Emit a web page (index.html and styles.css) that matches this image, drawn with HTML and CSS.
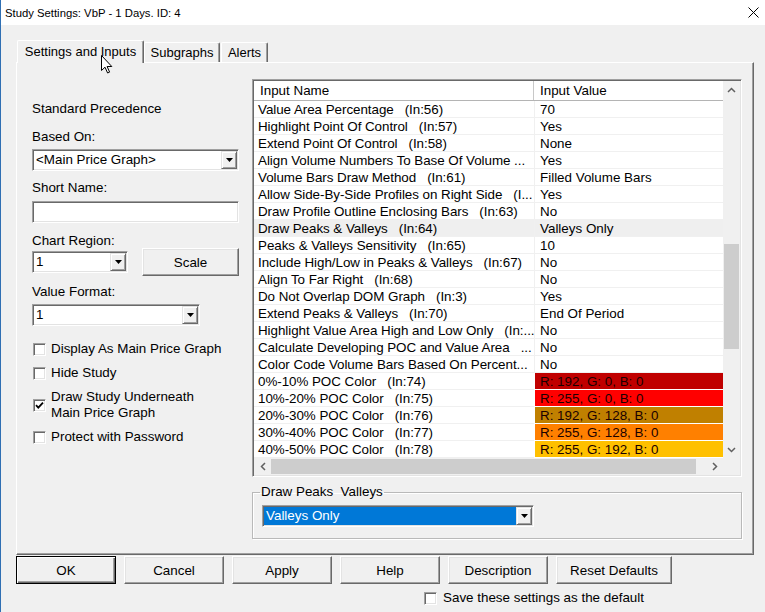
FILE: index.html
```html
<!DOCTYPE html>
<html lang="en">
<head>
  <meta charset="UTF-8" />
  <meta name="viewport" content="width=device-width, initial-scale=1.0" />
  <title>Study Settings: VbP - 1 Days. ID: 4</title>
  <link rel="stylesheet" href="styles.css">
</head>
<body>
  <div class="titlebar">
    <span class="title">Study Settings: VbP - 1 Days. ID: 4</span>
    <svg class="close" width="11" height="11" viewBox="0 0 11 11"><path d="M0.5 0.5L10.5 10.5M10.5 0.5L0.5 10.5" stroke="#000" stroke-width="1"/></svg>
  </div>

  <div class="dialog">
    <div class="tabs">
      <div class="tab tab-active tab-settings">Settings and Inputs</div>
      <div class="tab tab-subgraphs">Subgraphs</div>
      <div class="tab tab-alerts">Alerts</div>
    </div>

    <div class="panel">
      <div class="left-col">
        <div class="precedence">Standard Precedence</div>

        <div class="field-label">Based On:</div>
        <div class="combo combo-based">
          <span class="combo-text">&lt;Main Price Graph&gt;</span>
          <span class="combo-btn"><svg width="7" height="4" viewBox="0 0 7 4"><path d="M0 0H7L3.5 4Z" fill="#000"/></svg></span>
        </div>

        <div class="field-label label-gap">Short Name:</div>
        <div class="textbox"></div>

        <div class="field-label label-gap label-region">Chart Region:</div>
        <div class="region-row">
          <div class="combo combo-region">
            <span class="combo-text">1</span>
            <span class="combo-btn"><svg width="7" height="4" viewBox="0 0 7 4"><path d="M0 0H7L3.5 4Z" fill="#000"/></svg></span>
          </div>
          <button class="btn btn-scale">Scale</button>
        </div>

        <div class="field-label label-format">Value Format:</div>
        <div class="combo combo-format">
          <span class="combo-text">1</span>
          <span class="combo-btn"><svg width="7" height="4" viewBox="0 0 7 4"><path d="M0 0H7L3.5 4Z" fill="#000"/></svg></span>
        </div>

        <div class="checks">
          <div class="check"><span class="box"></span><span>Display As Main Price Graph</span></div>
          <div class="check"><span class="box"></span><span>Hide Study</span></div>
          <div class="check"><span class="box"><svg width="9" height="9" viewBox="0 0 9 9"><path d="M1 4.2L3.3 6.6L8 1.6" fill="none" stroke="#000" stroke-width="1.8"/></svg></span><span>Draw Study Underneath<br>Main Price Graph</span></div>
          <div class="check"><span class="box"></span><span>Protect with Password</span></div>
        </div>
      </div>

      <div class="right-col">
        <div class="inputs-table">
          <div class="grid-area">
            <div class="grid-head">
              <div class="head-name">Input Name</div>
              <div class="head-value">Input Value</div>
            </div>
            <div class="row"><div class="cell-name">Value Area Percentage   (In:56)</div><div class="cell-value">70</div></div>
            <div class="row"><div class="cell-name">Highlight Point Of Control   (In:57)</div><div class="cell-value">Yes</div></div>
            <div class="row"><div class="cell-name">Extend Point Of Control   (In:58)</div><div class="cell-value">None</div></div>
            <div class="row"><div class="cell-name">Align Volume Numbers To Base Of Volume ...</div><div class="cell-value">Yes</div></div>
            <div class="row"><div class="cell-name">Volume Bars Draw Method   (In:61)</div><div class="cell-value">Filled Volume Bars</div></div>
            <div class="row"><div class="cell-name">Allow Side-By-Side Profiles on Right Side   (I...</div><div class="cell-value">Yes</div></div>
            <div class="row"><div class="cell-name">Draw Profile Outline Enclosing Bars   (In:63)</div><div class="cell-value">No</div></div>
            <div class="row row-selected"><div class="cell-name">Draw Peaks &amp; Valleys   (In:64)</div><div class="cell-value">Valleys Only</div></div>
            <div class="row"><div class="cell-name">Peaks &amp; Valleys Sensitivity   (In:65)</div><div class="cell-value">10</div></div>
            <div class="row"><div class="cell-name">Include High/Low in Peaks &amp; Valleys   (In:67)</div><div class="cell-value">No</div></div>
            <div class="row"><div class="cell-name">Align To Far Right   (In:68)</div><div class="cell-value">No</div></div>
            <div class="row"><div class="cell-name">Do Not Overlap DOM Graph   (In:3)</div><div class="cell-value">Yes</div></div>
            <div class="row"><div class="cell-name">Extend Peaks &amp; Valleys   (In:70)</div><div class="cell-value">End Of Period</div></div>
            <div class="row"><div class="cell-name">Highlight Value Area High and Low Only   (In:...</div><div class="cell-value">No</div></div>
            <div class="row"><div class="cell-name">Calculate Developing POC and Value Area   ...</div><div class="cell-value">No</div></div>
            <div class="row"><div class="cell-name">Color Code Volume Bars Based On Percent...</div><div class="cell-value">No</div></div>
            <div class="row"><div class="cell-name">0%-10% POC Color   (In:74)</div><div class="cell-value swatch swatch-1">R: 192, G: 0, B: 0</div></div>
            <div class="row"><div class="cell-name">10%-20% POC Color   (In:75)</div><div class="cell-value swatch swatch-2">R: 255, G: 0, B: 0</div></div>
            <div class="row"><div class="cell-name">20%-30% POC Color   (In:76)</div><div class="cell-value swatch swatch-3">R: 192, G: 128, B: 0</div></div>
            <div class="row"><div class="cell-name">30%-40% POC Color   (In:77)</div><div class="cell-value swatch swatch-4">R: 255, G: 128, B: 0</div></div>
            <div class="row"><div class="cell-name">40%-50% POC Color   (In:78)</div><div class="cell-value swatch swatch-5">R: 255, G: 192, B: 0</div></div>
          </div>

          <div class="vscroll">
            <div class="sb-btn"><svg width="9" height="6" viewBox="0 0 9 6"><path d="M1 5L4.5 1.5L8 5" fill="none" stroke="#606060" stroke-width="1.5"/></svg></div>
            <div class="vtrack"><div class="vthumb"></div></div>
            <div class="sb-btn"><svg width="9" height="6" viewBox="0 0 9 6"><path d="M1 1L4.5 4.5L8 1" fill="none" stroke="#606060" stroke-width="1.5"/></svg></div>
          </div>

          <div class="hscroll">
            <div class="sb-btn"><svg width="6" height="9" viewBox="0 0 6 9"><path d="M5 1L1.5 4.5L5 8" fill="none" stroke="#606060" stroke-width="1.5"/></svg></div>
            <div class="htrack"><div class="hthumb"></div></div>
            <div class="sb-btn"><svg width="6" height="9" viewBox="0 0 6 9"><path d="M1 1L4.5 4.5L1 8" fill="none" stroke="#606060" stroke-width="1.5"/></svg></div>
          </div>

          <div class="corner"></div>
        </div>

        <fieldset class="group">
          <legend>Draw Peaks&nbsp; Valleys</legend>
          <div class="combo combo-edit">
            <span class="combo-text combo-selected">Valleys Only</span>
            <span class="combo-btn"><svg width="7" height="4" viewBox="0 0 7 4"><path d="M0 0H7L3.5 4Z" fill="#000"/></svg></span>
          </div>
        </fieldset>
      </div>
    </div>

    <div class="buttons">
      <button class="btn btn-default">OK</button>
      <button class="btn">Cancel</button>
      <button class="btn">Apply</button>
      <button class="btn">Help</button>
      <button class="btn">Description</button>
      <button class="btn btn-reset">Reset Defaults</button>
    </div>

    <div class="check save-default"><span class="box"></span><span>Save these settings as the default</span></div>
  </div>

  <svg class="cursor" width="13" height="20" viewBox="0 0 13 20"><path d="M0.5 0.5V15.5L4 12.2L6.6 18L8.6 17.1L6.1 11.5H10.8Z" fill="#fff" stroke="#000" stroke-width="1" stroke-linejoin="round"/></svg>
</body>
</html>
```

FILE: styles.css
```css
html, body {
  margin: 0;
}

body {
  position: relative;
  width: 765px;
  height: 612px;
  overflow: hidden;
  box-sizing: border-box;
  border-left: 1px solid #2f6fb3;
  background-color: #f0f0f0;
  color: #000;
  font-family: "Liberation Sans", Arial, sans-serif;
  font-size: 13.4px;
  line-height: 16px;
}

/* title bar */
.titlebar {
  height: 25px;
  background-color: #fff;
  display: flex;
  align-items: center;
  justify-content: space-between;
  padding: 0 6px 0 4px;
}

.title {
  font-size: 11.3px;
}

/* dialog body */
.dialog {
  padding-left: 15px;
}

.tabs {
  display: flex;
  align-items: flex-end;
  height: 22px;
  margin-top: 15px;
}

.tab {
  box-sizing: border-box;
  height: 20px;
  padding-top: 2px;
  margin-left: 1px;
  text-align: center;
  font-size: 13px;
  border: 1px solid;
  border-color: #fff #696969 transparent #fff;
  border-bottom: none;
  border-radius: 2px 2px 0 0;
  box-shadow: inset -1px 0 #a0a0a0;
}

.tab-active {
  position: relative;
  z-index: 1;
  height: 23px;
  padding-top: 3px;
  margin-bottom: -1px;
  background-color: #f0f0f0;
}

.tab-settings { width: 127px; }
.tab-subgraphs { width: 76px; margin-left: 0; }
.tab-alerts { width: 47px; }

.panel {
  box-sizing: border-box;
  width: 738px;
  height: 493px;
  display: flex;
  padding: 16px 0 0 15px;
  border: 1px solid;
  border-color: #fff #696969 #696969 #fff;
  box-shadow: inset -1px -1px #a0a0a0;
}

/* left column */
.left-col {
  width: 207px;
  margin-top: 22px;
  display: flex;
  flex-direction: column;
}

.precedence {
  margin-bottom: 12px;
}

.field-label {
  margin-bottom: 4px;
}

.label-gap {
  margin-top: 9px;
}

.label-region {
  margin-top: 10px;
  margin-bottom: -1px;
}

.label-format {
  margin-top: 8px;
}

.combo,
.textbox {
  box-sizing: border-box;
  height: 22px;
  display: flex;
  padding: 1px;
  background-color: #fff;
  border: 1px solid;
  border-color: #a0a0a0 #fff #fff #a0a0a0;
  box-shadow: inset 1px 1px #696969, inset -1px -1px #e3e3e3;
}

.textbox {
  margin-top: 1px;
}

.combo-text {
  flex: 1;
  padding-left: 2px;
  line-height: 18px;
  white-space: nowrap;
  overflow: hidden;
}

.combo-btn {
  box-sizing: border-box;
  width: 16px;
  display: flex;
  align-items: center;
  justify-content: center;
  background-color: #f0f0f0;
  border: 1px solid;
  border-color: #e3e3e3 #696969 #696969 #e3e3e3;
  box-shadow: inset 1px 1px #fff, inset -1px -1px #a0a0a0;
}

.region-row {
  display: flex;
  align-items: center;
  justify-content: space-between;
}

.combo-region { width: 96px; }
.combo-format { width: 168px; }

.btn {
  box-sizing: border-box;
  width: 100px;
  height: 28px;
  padding: 0;
  font-family: inherit;
  font-size: 13.4px;
  color: #000;
  background-color: #f0f0f0;
  border: 1px solid;
  border-color: #fff #696969 #696969 #fff;
  box-shadow: inset -1px -1px #a0a0a0, inset 1px 1px #e3e3e3;
}

.btn-scale { width: 97px; }

.btn-default {
  border-color: #000;
  box-shadow: inset 1px 1px #fff, inset -1px -1px #696969, inset -2px -2px #a0a0a0;
}

.btn-reset { width: 116px; }

/* checkboxes */
.checks {
  margin-top: 15px;
  display: flex;
  flex-direction: column;
  gap: 8px;
}

.check {
  display: flex;
  align-items: center;
  gap: 5px;
}

.box {
  box-sizing: border-box;
  width: 13px;
  height: 13px;
  flex: none;
  margin-left: 1px;
  display: flex;
  align-items: center;
  justify-content: center;
  background-color: #fff;
  border: 1px solid;
  border-color: #a0a0a0 #fff #fff #a0a0a0;
  box-shadow: inset 1px 1px #696969, inset -1px -1px #e3e3e3;
}

/* inputs list */
.right-col {
  width: 490px;
  margin-left: 13px;
}

.inputs-table {
  box-sizing: border-box;
  height: 398px;
  padding: 1px;
  display: grid;
  grid-template-columns: 1fr 17px;
  grid-template-rows: 1fr 17px;
  border: 1px solid;
  border-color: #a0a0a0 #fff #fff #a0a0a0;
  box-shadow: inset 1px 1px #696969, inset -1px -1px #e3e3e3;
}

.grid-area {
  background-color: #fff;
  overflow: hidden;
}

.grid-head {
  display: flex;
  height: 20px;
  box-sizing: border-box;
  border-bottom: 1px solid #b4b4b4;
  line-height: 19px;
}

.head-name {
  box-sizing: border-box;
  width: 280px;
  padding-left: 6px;
  border-right: 1px solid #c8c8c8;
}

.head-value {
  padding-left: 6px;
}

.row {
  display: flex;
  height: 17px;
}

.cell-name,
.cell-value {
  box-sizing: border-box;
  height: 17px;
  padding-top: 2px;
  line-height: 14px;
  border-bottom: 1px solid #f0f0f0;
  white-space: pre;
}

.cell-name {
  width: 280px;
  padding-left: 4px;
  letter-spacing: -0.05px;
}

.cell-value {
  flex: 1;
  padding-left: 5px;
  border-left: 1px solid #f0f0f0;
}

.row-selected .cell-name,
.row-selected .cell-value {
  background-color: #efefef;
}

.swatch {
  border-color: #fff;
  color: #1a0000;
}

.swatch-1 { background-color: #c00000; }
.swatch-2 { background-color: #ff0000; }
.swatch-3 { background-color: #c08000; }
.swatch-4 { background-color: #ff8000; }
.swatch-5 { background-color: #ffc000; }

/* scrollbars */
.vscroll {
  display: flex;
  flex-direction: column;
  background-color: #f0f0f0;
}

.sb-btn {
  width: 17px;
  height: 17px;
  flex: none;
  display: flex;
  align-items: center;
  justify-content: center;
}

.vtrack {
  flex: 1;
}

.vthumb {
  height: 105px;
  margin: 146px 1px 0;
  background-color: #cdcdcd;
}

.hscroll {
  display: flex;
  background-color: #f0f0f0;
}

.htrack {
  flex: 1;
}

.hthumb {
  width: 425px;
  height: 15px;
  margin-top: 1px;
  background-color: #cdcdcd;
}

.corner {
  background-color: #f0f0f0;
}

/* group box */
.group {
  margin: 7px 0 0;
  padding: 0 0 11px 9px;
  min-width: 0;
  border: 1px solid #b9b9b9;
  box-shadow: inset 1px 1px #fff, 1px 1px #fff;
}

.group legend {
  padding: 0 1px;
  margin-left: -2px;
  line-height: 16px;
}

.combo-edit {
  width: 272px;
  margin-top: 5px;
}

.combo-selected {
  background-color: #0078d7;
  color: #fff;
}

/* bottom */
.buttons {
  display: flex;
  gap: 8px;
  margin-top: 1px;
}

.save-default {
  margin-top: 6px;
  padding-left: 407px;
  gap: 6px;
}

.cursor {
  position: absolute;
  left: 100px;
  top: 55px;
  z-index: 5;
}
```
